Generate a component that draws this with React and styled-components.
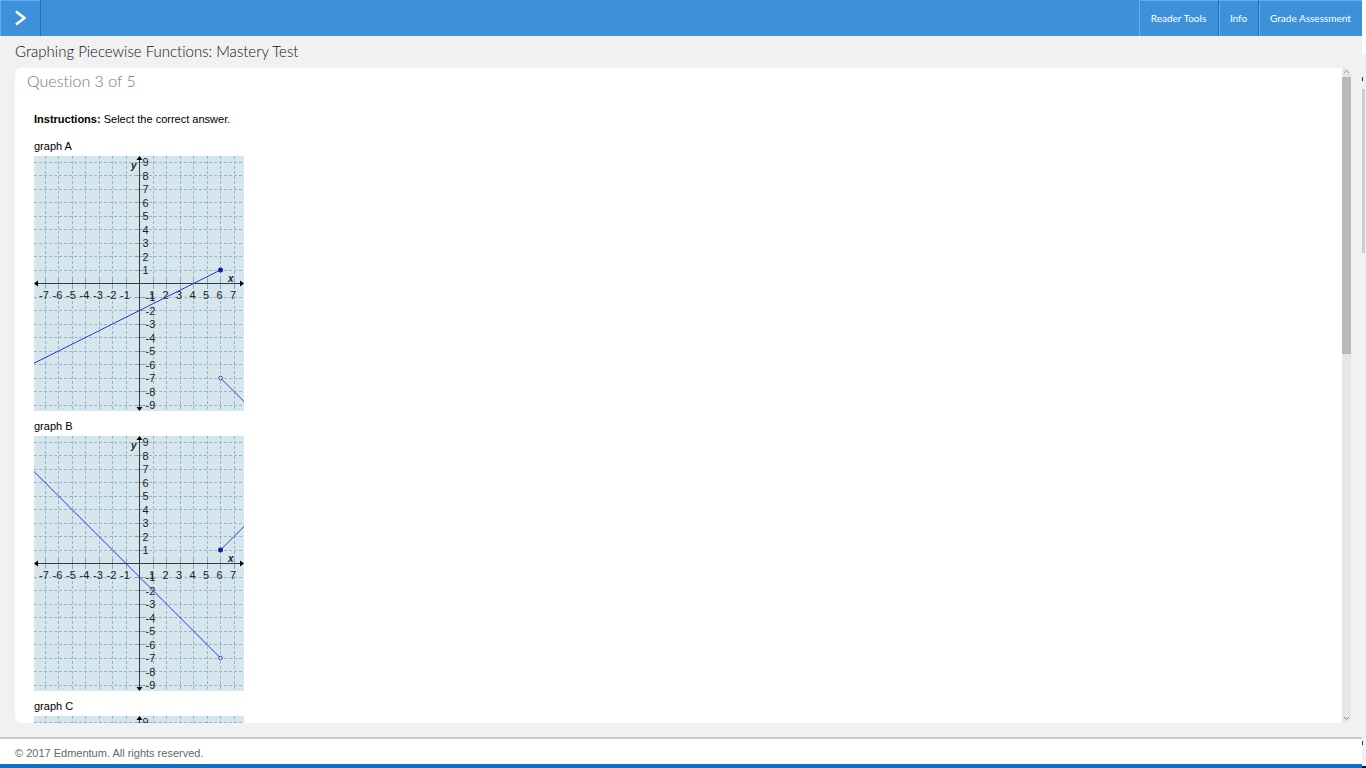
import React from "react";
import styled, { createGlobalStyle } from "styled-components";

const GlobalStyle = createGlobalStyle`
  *, *::before, *::after { box-sizing: border-box; }
  html, body { margin: 0; padding: 0; }
  body {
    background: #f1f1f1;
    font-family: "Liberation Sans", Arial, sans-serif;
    font-size: 11px;
    color: #000;
    font-variant-ligatures: none;
  }
`;

const display = `"Century Gothic", Lato, sans-serif`;

const Screen = styled.div`
  display: flex;
  height: 100vh;
  overflow: hidden;
`;

const Page = styled.div`
  flex: 1;
  min-width: 0;
  display: flex;
  flex-direction: column;
  border-bottom: 4px solid #0873cc;
`;

const Header = styled.header`
  display: flex;
  justify-content: space-between;
  height: 36px;
  flex: none;
  background: #3d91d9;
`;

const HeaderButton = styled.button`
  height: 36px;
  padding: 0;
  width: ${(p) => p.$width}px;
  display: flex;
  align-items: center;
  justify-content: center;
  border: 0 solid #1f6fc0;
  border-right-width: ${(p) => (p.$last ? 0 : 1)}px;
  box-shadow: inset 1px 1px 0 #5ab0f2;
  background: transparent;
  color: #fff;
  font-family: ${display};
  font-size: 10px;
  line-height: 16px;
  white-space: nowrap;
`;

const Menu = styled.nav`
  display: flex;
`;

const Title = styled.h1`
  flex: none;
  margin: 0;
  padding: 3px 15px 5px;
  font-family: ${display};
  font-size: 15px;
  line-height: 24px;
  font-weight: 300;
  color: #111;
`;

const Panel = styled.main`
  flex: 1;
  min-height: 0;
  display: flex;
  margin: 0 11px 14px 15px;
  border-radius: 6px;
  background: #fff;
  overflow: hidden;
`;

const Content = styled.div`
  flex: 1;
  min-width: 0;
  overflow-y: auto;
  scrollbar-width: none;
`;

const Counter = styled.h2`
  margin: 0;
  padding: 1px 12px 3px;
  font-family: ${display};
  font-size: 16px;
  line-height: 24px;
  font-weight: 300;
  color: #777;
`;

const Question = styled.section`
  padding: 16px 19px;
`;

const Instructions = styled.p`
  margin: 0 0 12px;
  line-height: 15px;
`;

const Figure = styled.figure`
  margin: 0 0 8px;
`;

const Caption = styled.figcaption`
  margin-bottom: 2px;
  line-height: 15px;
`;

const Plot = styled.svg`
  display: block;
`;

const Track = styled.div`
  display: flex;
  flex-direction: column;
  align-items: center;
  width: ${(p) => p.$width}px;
  background: ${(p) => p.$color};
`;

const Arrow = styled.svg`
  display: block;
  flex: none;
`;

const Thumb = styled.div`
  width: 100%;
  height: 277px;
  background: #b8b8b8;
`;

const Spacer = styled.div`
  flex: 1;
`;

const Footer = styled.footer`
  flex: none;
  height: 27px;
  padding: 7px 15px 3px;
  line-height: 15px;
  background: #fff;
  color: #666;
  border-top: 2px solid #cacaca;
`;

const Edge = styled.aside`
  flex: none;
  width: 4px;
  display: flex;
  flex-direction: column;
  background: #f1f1f1;
  border-bottom: 2px solid #111;
`;

const EdgeBlank = styled.div`
  height: 55px;
  background: #fff;
`;

const EdgeMark = styled.div`
  width: 1px;
  height: 4px;
  margin: ${(p) => p.$gap};
  background: #333;
`;

const EdgeThumb = styled.div`
  width: 3px;
  height: 164px;
  background: #cdcdcd;
`;

const UNIT = 13.5;
const WIDTH = 210;
const HEIGHT = 255;
const OX = 105.5;
const OY = 127.5;
const px = (x) => OX + x * UNIT;
const py = (y) => OY - y * UNIT;
const range = (n) =>
  Array.from({ length: 2 * n + 1 }, (_, i) => i - n).filter(Boolean);

function Graph({ name, lines, closed, open }) {
  return (
    <Figure>
      <Caption>{name}</Caption>
      <Plot
        width={WIDTH}
        height={HEIGHT}
        viewBox={`0 0 ${WIDTH} ${HEIGHT}`}
        role="img"
        aria-label={name}
      >
        <rect width={WIDTH} height={HEIGHT} fill="#d7e6ed" />
        <g stroke="#8fbacb" strokeWidth="1" strokeDasharray="3 2" shapeRendering="crispEdges">
          {range(7).map((x) => (
            <line key={x} x1={px(x)} x2={px(x)} y1="0" y2={HEIGHT} />
          ))}
          {range(9).map((y) => (
            <line key={y} x1="0" x2={WIDTH} y1={py(y)} y2={py(y)} />
          ))}
        </g>
        <g stroke="#7fa9bb" shapeRendering="crispEdges">
          {range(7).map((x) => (
            <line key={x} x1={px(x)} x2={px(x)} y1={OY - 5} y2={OY + 5} />
          ))}
          {range(9).map((y) => (
            <line key={y} x1={OX - 5} x2={OX + 5} y1={py(y)} y2={py(y)} />
          ))}
        </g>
        <g stroke="#2b3c44" strokeWidth="1">
          <line x1="1" x2={WIDTH - 1} y1={OY} y2={OY} />
          <line x1={OX} x2={OX} y1="1" y2={HEIGHT - 1} />
        </g>
        <g fill="#000">
          <path d={`M0 ${OY}l4-3v6z`} />
          <path d={`M${WIDTH} ${OY}l-4-3v6z`} />
          <path d={`M${OX} 0l-3 4h6z`} />
          <path d={`M${OX} ${HEIGHT}l-3-4h6z`} />
        </g>
        <g fontSize="11" fill="#222" textAnchor="middle">
          {range(7).map((x) => (
            <text key={x} x={px(x) - 1} y={OY + 15}>
              {x}
            </text>
          ))}
        </g>
        <g fontSize="11" fill="#222">
          {range(9).map((y) => (
            <text key={y} x={OX + (y < 0 ? 6 : 3)} y={py(y) + 4}>
              {y}
            </text>
          ))}
        </g>
        <g fontSize="10" fontWeight="700" fontStyle="italic" fill="#222">
          <text x="97" y="13">y</text>
          <text x="194" y={OY - 2}>x</text>
        </g>
        <g stroke="#3038c8" strokeWidth="1" fill="none">
          {lines.map(([x1, y1, x2, y2]) => (
            <line key={x1} x1={px(x1)} y1={py(y1)} x2={px(x2)} y2={py(y2)} />
          ))}
        </g>
        {closed && <circle cx={px(closed[0])} cy={py(closed[1])} r="2.5" fill="#10209c" />}
        {open && (
          <circle cx={px(open[0])} cy={py(open[1])} r="1.8" fill="#e8eef8" stroke="#3a3f9c" />
        )}
      </Plot>
    </Figure>
  );
}

const GRAPHS = [
  { name: "graph A", lines: [[-8, -6, 6, 1], [6, -7, 8, -9]], closed: [6, 1], open: [6, -7] },
  { name: "graph B", lines: [[-8, 7, 6, -7], [6, 1, 8, 3]], closed: [6, 1], open: [6, -7] },
  { name: "graph C", lines: [] },
];

export default function App() {
  return (
    <>
      <GlobalStyle />
      <Screen>
        <Page>
          <Header>
            <HeaderButton $width={41} aria-label="Open navigation">
              <svg width="12" height="16" viewBox="0 0 12 16">
                <path d="M2 1.5l8.5 6.5L2 14.5" fill="none" stroke="#fff" strokeWidth="2.6" />
              </svg>
            </HeaderButton>
            <Menu>
              <HeaderButton $width={80}>Reader Tools</HeaderButton>
              <HeaderButton $width={40}>Info</HeaderButton>
              <HeaderButton $width={103} $last>Grade Assessment</HeaderButton>
            </Menu>
          </Header>
          <Title>Graphing Piecewise Functions: Mastery Test</Title>
          <Panel>
            <Content>
              <Counter>Question 3 of 5</Counter>
              <Question>
                <Instructions>
                  <b>Instructions:</b> Select the correct answer.
                </Instructions>
                {GRAPHS.map((g) => (
                  <Graph key={g.name} {...g} />
                ))}
              </Question>
            </Content>
            <Track $width={9} $color="#e6e6e6">
              <Arrow width="9" height="9" viewBox="0 0 9 9">
                <path d="M2 5l2.5-2.5L7 5" fill="none" stroke="#999" />
              </Arrow>
              <Thumb />
              <Spacer />
              <Arrow width="9" height="9" viewBox="0 0 9 9">
                <path d="M2 3l2.5 2.5L7 3" fill="none" stroke="#888" />
              </Arrow>
            </Track>
          </Panel>
          <Footer>© 2017 Edmentum. All rights reserved.</Footer>
        </Page>
        <Edge>
          <EdgeBlank />
          <EdgeMark $gap="22px 0 8px" />
          <EdgeThumb />
          <Spacer />
          <EdgeMark $gap="0 0 21px" />
        </Edge>
      </Screen>
    </>
  );
}
